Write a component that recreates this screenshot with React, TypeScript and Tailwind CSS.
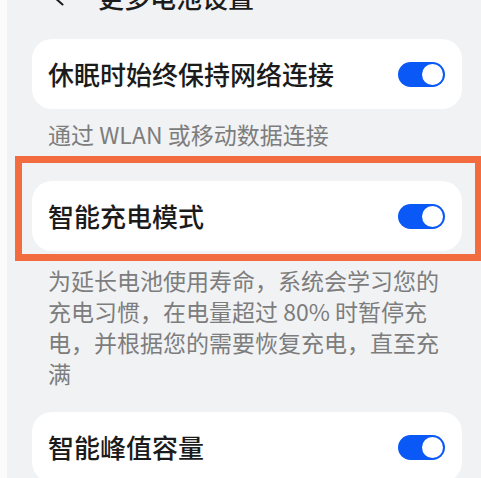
import React from 'react';

const FONT = { fontFamily: '"Noto Sans CJK SC", "Noto Sans", sans-serif' };

const Toggle: React.FC = () => (
    <div className="w-[47px] h-[25px] rounded-full bg-[#0a59f7] flex items-center justify-end p-[2px]">
        <div className="w-[21px] h-[21px] rounded-full bg-white" />
    </div>
);

const SettingCard: React.FC<{ title: string }> = ({ title }) => (
    <div className="ml-[25px] w-[430px] h-[70px] bg-white rounded-[20px] flex items-center justify-between pl-[16px] pr-[17px]">
        <span className="text-[26px] leading-none font-medium text-[#1b1b1b]">{title}</span>
        <Toggle />
    </div>
);

const App: React.FC = () => {
    return (
        <div className="w-[481px] h-[478px] overflow-hidden flex" style={FONT}>
            <div className="w-[7px] bg-[#fbfbfb]" />
            <div className="flex-1 bg-[#f1f2f4] flex flex-col">
                {/* Header, mostly scrolled off the top */}
                <div className="-mt-[16px] h-[36px] flex items-center pl-[45px]">
                    <svg width="12" height="18" viewBox="0 0 12 18" fill="none">
                        <path d="M10.5 1.5 L2 9 L10.5 16.5" stroke="#1b1b1b" strokeWidth="2" strokeLinecap="round" strokeLinejoin="round" />
                    </svg>
                    <span className="ml-[34px] text-[26px] leading-none font-medium text-[#1b1b1b]">更多电池设置</span>
                </div>

                <div className="mt-[29px]">
                    <SettingCard title="休眠时始终保持网络连接" />
                </div>
                <p className="mt-[10px] ml-[41px] text-[23px] leading-[30px] text-[#7d7d7d]">通过 WLAN 或移动数据连接</p>

                {/* Highlighted card */}
                <div className="relative mt-[32px]">
                    <SettingCard title="智能充电模式" />
                    <div className="absolute top-[-25px] bottom-[-10px] left-[8px] right-[-1px] border-[7px] border-[#f26c40] pointer-events-none" />
                </div>

                <div className="mt-[14px] ml-[41px] text-[23px] leading-[31px] text-[#7d7d7d]">
                    <div>为延长电池使用寿命，系统会学习您的</div>
                    <div>充电习惯，在电量超过 80% 时暂停充</div>
                    <div>电，并根据您的需要恢复充电，直至充</div>
                    <div>满</div>
                </div>

                <div className="mt-[23px]">
                    <SettingCard title="智能峰值容量" />
                </div>
            </div>
        </div>
    );
};

export default App;
